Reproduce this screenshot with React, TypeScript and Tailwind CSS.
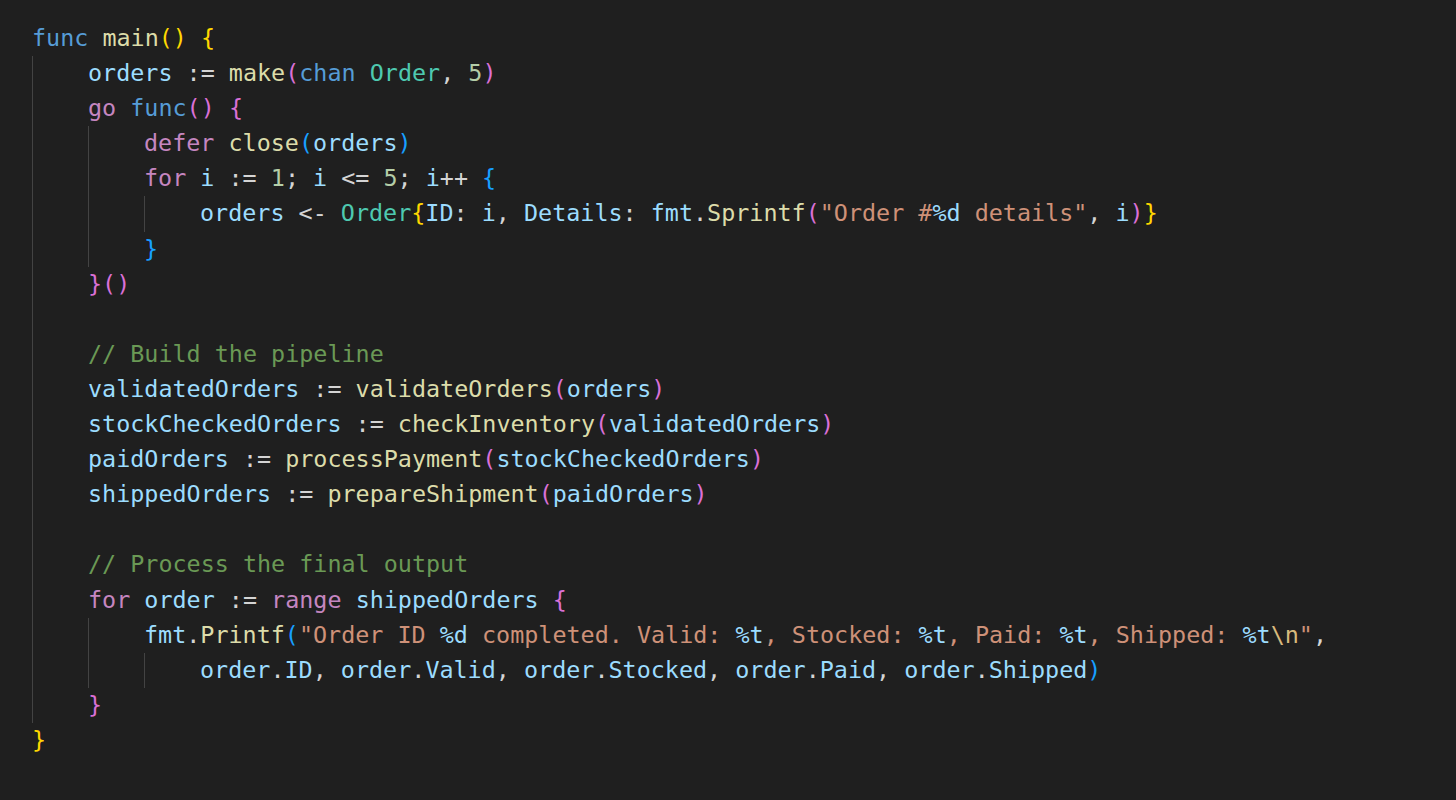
import React from "react";

type Tok = [string, string];

const C = {
  kw: "text-[#569CD6]",
  ctl: "text-[#C586C0]",
  fn: "text-[#DCDCAA]",
  v: "text-[#9CDCFE]",
  ty: "text-[#4EC9B0]",
  num: "text-[#B5CEA8]",
  str: "text-[#CE9178]",
  cm: "text-[#6A9955]",
  p: "text-[#D4D4D4]",
  b1: "text-[#FFD700]",
  b2: "text-[#DA70D6]",
  b3: "text-[#179FFF]",
  esc: "text-[#D7BA7D]",
};

type Line = { guides: number; indent: number; toks: Tok[] };

const lines: Line[] = [
  { guides: 0, indent: 0, toks: [[C.kw, "func"], [C.p, " "], [C.fn, "main"], [C.b1, "()"], [C.p, " "], [C.b1, "{"]] },
  { guides: 1, indent: 1, toks: [[C.v, "orders"], [C.p, " := "], [C.fn, "make"], [C.b2, "("], [C.kw, "chan"], [C.p, " "], [C.ty, "Order"], [C.p, ", "], [C.num, "5"], [C.b2, ")"]] },
  { guides: 1, indent: 1, toks: [[C.ctl, "go"], [C.p, " "], [C.kw, "func"], [C.b2, "()"], [C.p, " "], [C.b2, "{"]] },
  { guides: 2, indent: 2, toks: [[C.ctl, "defer"], [C.p, " "], [C.fn, "close"], [C.b3, "("], [C.v, "orders"], [C.b3, ")"]] },
  { guides: 2, indent: 2, toks: [[C.ctl, "for"], [C.p, " "], [C.v, "i"], [C.p, " := "], [C.num, "1"], [C.p, "; "], [C.v, "i"], [C.p, " <= "], [C.num, "5"], [C.p, "; "], [C.v, "i"], [C.p, "++ "], [C.b3, "{"]] },
  {
    guides: 3,
    indent: 3,
    toks: [
      [C.v, "orders"], [C.p, " <- "], [C.ty, "Order"], [C.b1, "{"], [C.v, "ID"], [C.p, ": "], [C.v, "i"], [C.p, ", "],
      [C.v, "Details"], [C.p, ": "], [C.v, "fmt"], [C.p, "."], [C.fn, "Sprintf"], [C.b2, "("], [C.str, "\"Order #"],
      [C.v, "%d"], [C.str, " details\""], [C.p, ", "], [C.v, "i"], [C.b2, ")"], [C.b1, "}"],
    ],
  },
  { guides: 2, indent: 2, toks: [[C.b3, "}"]] },
  { guides: 1, indent: 1, toks: [[C.b2, "}()"]] },
  { guides: 1, indent: 1, toks: [] },
  { guides: 1, indent: 1, toks: [[C.cm, "// Build the pipeline"]] },
  { guides: 1, indent: 1, toks: [[C.v, "validatedOrders"], [C.p, " := "], [C.fn, "validateOrders"], [C.b2, "("], [C.v, "orders"], [C.b2, ")"]] },
  { guides: 1, indent: 1, toks: [[C.v, "stockCheckedOrders"], [C.p, " := "], [C.fn, "checkInventory"], [C.b2, "("], [C.v, "validatedOrders"], [C.b2, ")"]] },
  { guides: 1, indent: 1, toks: [[C.v, "paidOrders"], [C.p, " := "], [C.fn, "processPayment"], [C.b2, "("], [C.v, "stockCheckedOrders"], [C.b2, ")"]] },
  { guides: 1, indent: 1, toks: [[C.v, "shippedOrders"], [C.p, " := "], [C.fn, "prepareShipment"], [C.b2, "("], [C.v, "paidOrders"], [C.b2, ")"]] },
  { guides: 1, indent: 1, toks: [] },
  { guides: 1, indent: 1, toks: [[C.cm, "// Process the final output"]] },
  { guides: 1, indent: 1, toks: [[C.ctl, "for"], [C.p, " "], [C.v, "order"], [C.p, " := "], [C.ctl, "range"], [C.p, " "], [C.v, "shippedOrders"], [C.p, " "], [C.b2, "{"]] },
  {
    guides: 2,
    indent: 2,
    toks: [
      [C.v, "fmt"], [C.p, "."], [C.fn, "Printf"], [C.b3, "("], [C.str, "\"Order ID "], [C.v, "%d"],
      [C.str, " completed. Valid: "], [C.v, "%t"], [C.str, ", Stocked: "], [C.v, "%t"], [C.str, ", Paid: "],
      [C.v, "%t"], [C.str, ", Shipped: "], [C.v, "%t"], [C.esc, "\\n"], [C.str, "\""], [C.p, ","],
    ],
  },
  {
    guides: 3,
    indent: 3,
    toks: [
      [C.v, "order"], [C.p, "."], [C.v, "ID"], [C.p, ", "], [C.v, "order"], [C.p, "."], [C.v, "Valid"], [C.p, ", "],
      [C.v, "order"], [C.p, "."], [C.v, "Stocked"], [C.p, ", "], [C.v, "order"], [C.p, "."], [C.v, "Paid"], [C.p, ", "],
      [C.v, "order"], [C.p, "."], [C.v, "Shipped"], [C.b3, ")"],
    ],
  },
  { guides: 1, indent: 1, toks: [[C.b2, "}"]] },
  { guides: 0, indent: 0, toks: [[C.b1, "}"]] },
];

export default function App() {
  return (
    <div
      className="w-[1456px] h-[800px] bg-[#1f1f1f] overflow-hidden pl-[32px] pt-[21px]"
      style={{ fontFamily: '"DejaVu Sans Mono", "Liberation Mono", monospace' }}
    >
      {lines.map((ln, i) => (
        <div key={i} className="flex h-[35.1px] items-center whitespace-pre text-[23.4px] leading-[35.1px] text-[#D4D4D4]">
          {Array.from({ length: ln.indent }).map((_, j) => (
            <span
              key={j}
              className={
                j < ln.guides
                  ? "inline-block w-[56px] h-full shrink-0 border-l border-[#434343]"
                  : "inline-block w-[56px] h-full shrink-0"
              }
            />
          ))}
          <span>
            {ln.toks.map((t, k) => (
              <span key={k} className={t[0]}>
                {t[1]}
              </span>
            ))}
          </span>
        </div>
      ))}
    </div>
  );
}
